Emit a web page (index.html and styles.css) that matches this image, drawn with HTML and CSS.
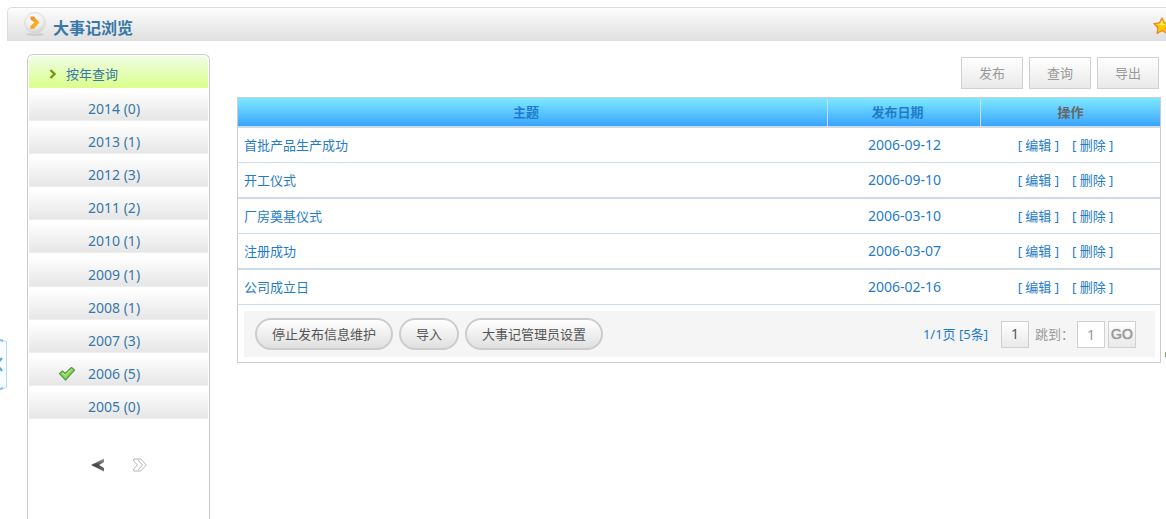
FILE: index.html
```html
<!DOCTYPE html>
<html lang="zh-CN">
<head>
    <meta charset="UTF-8">
    <meta name="viewport" content="width=device-width, initial-scale=1.0">
    <title>大事记浏览</title>
    <link rel="stylesheet" href="styles.css">
</head>
<body>
    <header class="title-bar">
        <svg class="title-icon" width="24" height="26" viewBox="0 0 24 26" aria-hidden="true">
            <defs>
                <radialGradient id="ball" cx="0.45" cy="0.3" r="0.7">
                    <stop offset="0" stop-color="#ffffff"/>
                    <stop offset="0.6" stop-color="#eeeeee"/>
                    <stop offset="1" stop-color="#cfcfcf"/>
                </radialGradient>
                <linearGradient id="orange" x1="0" y1="0" x2="1" y2="1">
                    <stop offset="0" stop-color="#f08a24"/>
                    <stop offset="1" stop-color="#ffc62e"/>
                </linearGradient>
            </defs>
            <ellipse cx="12" cy="23.5" rx="9" ry="1.5" fill="#cccccc"/>
            <circle cx="12" cy="12" r="10.5" fill="url(#ball)" stroke="#e0e0e0"/>
            <path d="M7.500 5.500h3.500l5.500 6-5.500 6.500H7.500v-3l4-3.500-4-3z" fill="url(#orange)"/>
        </svg>
        <h1>大事记浏览</h1>
        <a class="favorite" href="#" aria-label="收藏">
            <svg width="18" height="18" viewBox="0 0 18 18" aria-hidden="true">
                <path d="M9 1l2.300 4.800 5.700.7-4 4 1 6L9 13.500 4 16.500l1-5.500-4-4.500 5.500-.7z" fill="#ffc800" stroke="#e8851b" stroke-width="1.200" stroke-linejoin="round"/>
                <path d="M9 3l1 4 3 .5-4 1-5-1.200 3.500-.5z" fill="#fff27a"/>
            </svg>
        </a>
    </header>

    <a class="fold" href="#" aria-label="收起">
        <svg width="7" height="52" viewBox="0 0 7 52" aria-hidden="true">
            <path d="M0 1l6.500 1.500v46L0 50.500" fill="#f8fcff" stroke="#b5dcfc"/>
            <path d="M0 1l3 1M0 50l3-1" stroke="#7cc0fa" stroke-width="2"/>
            <path d="M2 19L-3 25l5 7" fill="none" stroke="#4ba6f0" stroke-width="2"/>
        </svg>
    </a>

    <div class="layout">
        <aside class="sidebar">
            <h2>
                <svg width="8" height="10" viewBox="0 0 8 10" aria-hidden="true">
                    <path d="M1.500 1l4 4-4 4" fill="none" stroke="#6c9c06" stroke-width="2.400"/>
                </svg>
                按年查询
            </h2>
            <ul class="years">
                <li><a href="#">2014 (0)</a></li>
                <li><a href="#">2013 (1)</a></li>
                <li><a href="#">2012 (3)</a></li>
                <li><a href="#">2011 (2)</a></li>
                <li><a href="#">2010 (1)</a></li>
                <li><a href="#">2009 (1)</a></li>
                <li><a href="#">2008 (1)</a></li>
                <li><a href="#">2007 (3)</a></li>
                <li class="current">
                    <svg width="18" height="16" viewBox="0 0 18 16" aria-hidden="true">
                        <path d="M1.500 7.500L4.500 5 7 7.500 13.500 1.500 16.500 4 7.500 14z" fill="#85dc5b" stroke="#5c9a4b" stroke-width="1.200" stroke-linejoin="round"/>
                        <path d="M4.500 6.500L7 9.300l6.500-6" fill="none" stroke="#b5f08e"/>
                    </svg>
                    <a href="#">2006 (5)</a>
                </li>
                <li><a href="#">2005 (0)</a></li>
            </ul>
            <div class="turn">
                <button type="button" aria-label="上一页">
                    <svg width="14" height="14" viewBox="0 0 14 14" aria-hidden="true">
                        <defs>
                            <linearGradient id="dark" x1="0" y1="0" x2="0" y2="1">
                                <stop offset="0" stop-color="#aaaaaa"/>
                                <stop offset="0.5" stop-color="#444444"/>
                                <stop offset="1" stop-color="#777777"/>
                            </linearGradient>
                        </defs>
                        <path d="M0 7L13 .5v3.500L8 7l5 3v3.500z" fill="url(#dark)"/>
                    </svg>
                </button>
                <button type="button" aria-label="下一页">
                    <svg width="14" height="14" viewBox="0 0 14 14" aria-hidden="true">
                        <path d="M.7 1h7l5.600 6-5.600 6h-7v-2L4.500 7 .7 3zM5 2l4.500 5L5 12" fill="none" stroke="#b5b5b5"/>
                    </svg>
                </button>
            </div>
        </aside>

        <main class="content">
            <div class="toolbar">
                <button type="button">发布</button>
                <button type="button">查询</button>
                <button type="button">导出</button>
            </div>
            <div class="panel">
                <table class="events">
                    <thead>
                        <tr>
                            <th class="col-topic"><a href="#">主题</a></th>
                            <th class="col-date"><a href="#">发布日期</a></th>
                            <th class="col-action">操作</th>
                        </tr>
                    </thead>
                    <tbody>
                        <tr>
                            <td><a href="#">首批产品生产成功</a></td>
                            <td class="date">2006-09-12</td>
                            <td class="action"><a href="#">[ 编辑 ]</a><a href="#">[ 删除 ]</a></td>
                        </tr>
                        <tr>
                            <td><a href="#">开工仪式</a></td>
                            <td class="date">2006-09-10</td>
                            <td class="action"><a href="#">[ 编辑 ]</a><a href="#">[ 删除 ]</a></td>
                        </tr>
                        <tr>
                            <td><a href="#">厂房奠基仪式</a></td>
                            <td class="date">2006-03-10</td>
                            <td class="action"><a href="#">[ 编辑 ]</a><a href="#">[ 删除 ]</a></td>
                        </tr>
                        <tr>
                            <td><a href="#">注册成功</a></td>
                            <td class="date">2006-03-07</td>
                            <td class="action"><a href="#">[ 编辑 ]</a><a href="#">[ 删除 ]</a></td>
                        </tr>
                        <tr>
                            <td><a href="#">公司成立日</a></td>
                            <td class="date">2006-02-16</td>
                            <td class="action"><a href="#">[ 编辑 ]</a><a href="#">[ 删除 ]</a></td>
                        </tr>
                    </tbody>
                </table>
                <div class="bottom">
                    <div class="pills">
                        <button type="button">停止发布信息维护</button>
                        <button type="button">导入</button>
                        <button type="button">大事记管理员设置</button>
                    </div>
                    <form class="pager">
                        <span class="total">1/1页 [5条]</span>
                        <button type="button" class="page">1</button>
                        <label for="page-no">跳到：</label>
                        <input type="text" id="page-no" value="1">
                        <button type="button" class="go">GO</button>
                    </form>
                </div>
            </div>
        </main>
    </div>
    <i class="edge-mark"></i>
</body>
</html>
```
FILE: styles.css
```css
* {
    box-sizing: border-box;
}
body {
    display: flex;
    flex-direction: column;
    position: relative;
    min-height: 100vh;
    margin: 0;
    padding: 7px 0 0 7px;
    overflow: hidden;
    font-family: "Noto Sans", "Noto Sans CJK SC", sans-serif;
    font-size: 13px;
    line-height: 20px;
    color: #666;
    background-color: #fff;
}
a {
    color: #1f7cc8;
    text-decoration: none;
}
button, input {
    font: inherit;
    margin: 0;
}
button {
    cursor: pointer;
}
svg {
    display: block;
    flex: none;
}
.title-bar {
    display: flex;
    align-items: center;
    height: 34px;
    padding-left: 15px;
    border-top: 1px solid #ddd;
    border-left: 1px solid #ddd;
    border-top-left-radius: 5px;
    background: linear-gradient(#fdfdfd, #dfdfdf);
}
.title-icon {
    margin-bottom: 2px;
}
.title-bar h1 {
    flex: 1;
    margin: 6px 0 0 6px;
    font-size: 16px;
    font-weight: 600;
    line-height: 24px;
    color: #3878a8;
}
.favorite {
    margin: 2px -5px 0 0;
}
.fold {
    position: absolute;
    left: 0;
    top: 339px;
}
.edge-mark {
    position: absolute;
    right: 0;
    top: 352px;
    width: 1px;
    height: 5px;
    background-color: #76a55c;
}
.layout {
    display: flex;
    flex: 1;
    gap: 27px;
    padding: 13px 5px 0 20px;
}
.sidebar {
    flex: none;
    width: 183px;
    padding: 1px;
    border: 1px solid #ccc;
    border-bottom: none;
    border-radius: 6px 6px 0 0;
}
.sidebar h2 {
    display: flex;
    align-items: center;
    gap: 9px;
    height: 32px;
    margin: 0;
    padding: 4px 0 0 20px;
    border-radius: 5px 5px 0 0;
    font-size: 13px;
    font-weight: normal;
    color: #3878a8;
    background: linear-gradient(#effde4, #dbff8b);
}
.years {
    display: flex;
    flex-direction: column;
    min-height: 331px;
    margin: 0;
    padding: 0;
    list-style: none;
}
.years li {
    display: flex;
    flex: 1;
    align-items: center;
    gap: 12px;
    padding: 10px 0 0 59px;
    border-bottom: 1px solid #eee;
    font-size: 14px;
    background: linear-gradient(#fff 10%, #e6e6e6);
}
.years .current {
    padding-left: 29px;
}
.years a {
    color: #3878a8;
}
.turn {
    display: flex;
    gap: 28px;
    padding: 39px 0 0 62px;
}
.turn button {
    padding: 0;
    border: none;
    background: none;
}
.content {
    flex: 1;
}
.toolbar {
    display: flex;
    justify-content: flex-end;
    gap: 6px;
    padding: 3px 2px 8px 0;
}
.toolbar button {
    width: 62px;
    height: 32px;
    border: 1px solid #d0d0d0;
    color: #999;
    background: linear-gradient(#fff, #e9e9e9);
}
.panel {
    border: 1px solid #ccc;
}
.events {
    width: 100%;
    border-collapse: separate;
    border-spacing: 0;
    table-layout: fixed;
}
.events th {
    height: 30px;
    padding: 0;
    border-right: 1px solid #ccdcea;
    border-bottom: 2px solid #ccdcea;
    background: linear-gradient(#7eeaff, #39a4ff);
}
.events th:last-child {
    border-right: none;
}
.events .col-topic {
    width: 64%;
    padding-right: 13px;
}
.events .col-date {
    padding-right: 13px;
}
.events .col-action {
    width: 179px;
}
.events td {
    height: 35px;
    padding: 0 6px;
    border-bottom: 1px solid #ccdcea;
}
.events tbody tr:nth-child(even) td {
    height: 36px;
    border-bottom-width: 2px;
}
.events .date {
    text-align: center;
    font-size: 14px;
    color: #1f7cc8;
}
.events .action {
    padding-right: 16px;
    text-align: center;
}
.action a + a {
    margin-left: 13px;
}
.bottom {
    display: flex;
    align-items: center;
    justify-content: space-between;
    margin: 6px 5px 5px 6px;
    padding: 7px 19px 7px 11px;
    background-color: #f5f5f5;
}
.pills {
    display: flex;
    gap: 6px;
}
.pills button {
    height: 32px;
    padding: 0 15px;
    border: 2px solid #ccc;
    border-radius: 16px;
    color: #555;
    background: linear-gradient(#fff, #e0e0e0);
}
.pager {
    display: flex;
    align-items: center;
}
.total {
    margin-right: 13px;
    color: #1f7cc8;
}
.pager button, .pager input {
    width: 28px;
    height: 27px;
    padding: 0;
    border: 1px solid #d0d0d0;
    text-align: center;
    color: #999;
    background: linear-gradient(#fff, #e9e9e9);
}
.pager .page {
    margin-right: 6px;
    font-size: 14px;
    color: #555;
}
.pager label {
    margin-right: 3px;
    color: #999;
}
.pager input {
    margin-right: 3px;
    font-size: 14px;
    background: #fff;
}
.pager .go {
    font-family: "Liberation Sans", sans-serif;
    font-size: 14px;
    text-shadow: 0 0 1px #888;
}
```
